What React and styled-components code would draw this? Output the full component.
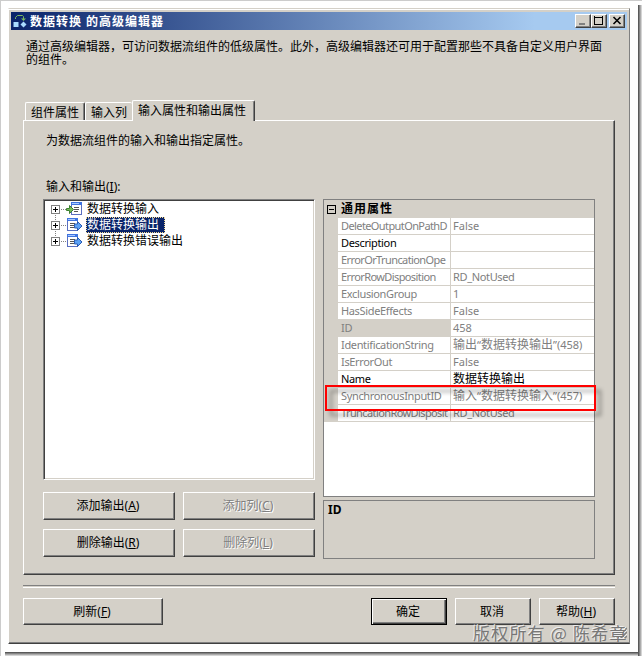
import React from 'react';
import styled, { createGlobalStyle } from 'styled-components';

const GlobalStyle = createGlobalStyle`
  * {
    box-sizing: border-box;
  }

  body {
    margin: 0;
    background: #fff;
    color: #000;
    font: 12px/14px 'Noto Sans', 'Noto Sans CJK SC', sans-serif;
    overflow: hidden;
  }

  u {
    text-decoration: underline;
    text-underline-offset: 1px;
  }
`;

const Page = styled.div`
  width: 642px;
  height: 656px;
  padding: 7px 0 0 7px;
  border-top: 1px solid #ccc;
  border-left: 1px solid #ccc;
  background: linear-gradient(90deg, #444, #888 40%, #e8e8e8) 637px 4px / 4px 652px no-repeat,
    linear-gradient(#444, #888 40%, #e8e8e8) 4px 651px / 634px 4px no-repeat, #fff;
`;

const Window = styled.div`
  position: relative;
  display: flex;
  flex-direction: column;
  width: 622px;
  height: 636px;
  padding: 2px 2px 0;
  background: #d4d0c8;
  border-left: 1px solid #fff;
  border-top: 1px solid #d4d0c8;
  border-right: 1px solid #808080;
  border-bottom: 1px solid #404040;
  box-shadow: inset 0 1px #fff, inset 0 -1px #808080;
`;

const TitleBar = styled.div`
  display: flex;
  align-items: center;
  flex: none;
  height: 18px;
  margin-top: 1px;
  padding: 0 2px;
  background: linear-gradient(90deg, #0a246a, #a6caf0 85%);
`;

const Title = styled.div`
  flex: 1;
  margin-left: 3px;
  padding-top: 1px;
  color: #fff;
  font-weight: bold;
  letter-spacing: 1px;
`;

const CaptionButton = styled.div`
  width: 16px;
  height: 14px;
  margin-left: ${({ apart }) => (apart ? '2px' : '0')};
  background: #d4d0c8;
  border: 1px solid;
  border-color: #fff #404040 #404040 #fff;
  box-shadow: inset -1px -1px #808080;

  svg {
    display: block;
  }
`;

const Intro = styled.p`
  margin: 10px 0 0 15px;
  height: 60px;
  line-height: 13px;
  white-space: pre;
`;

const Tabs = styled.div`
  display: flex;
  align-items: flex-end;
  position: relative;
  height: 20px;
  margin-left: 14px;
`;

const Tab = styled.div`
  flex: none;
  width: ${({ width }) => width}px;
  height: ${({ active }) => (active ? 21 : 18)}px;
  margin-bottom: ${({ active }) => (active ? -1 : 0)}px;
  padding: 3px 0 0 5px;
  background: #d4d0c8;
  border-top: 1px solid #fff;
  border-left: 1px solid #fff;
  border-right: ${({ covered }) => (covered ? '0' : '1px solid #404040')};
  box-shadow: ${({ covered }) => (covered ? 'none' : 'inset -1px 0 #808080')};
  border-radius: 2px 2px 0 0;
  white-space: nowrap;
`;

const Panel = styled.div`
  display: flex;
  flex-direction: column;
  height: 455px;
  margin: 0 12px;
  padding: 13px 18px 0 19px;
  border: 1px solid;
  border-color: #fff #404040 #404040 #fff;
  box-shadow: inset -1px -1px #808080;
`;

const PanelHint = styled.div`
  margin-left: 3px;
  height: 46px;
`;

const Columns = styled.div`
  display: flex;
  gap: 8px;
`;

const Column = styled.div`
  width: 272px;
`;

const Label = styled.div`
  height: 19px;
  margin-left: 3px;
`;

const Tree = styled.div`
  height: 281px;
  margin-bottom: 12px;
  padding: 1px 0 0 7px;
  background: #fff;
  border: 1px solid;
  border-color: #808080 #fff #fff #808080;
  box-shadow: inset 1px 1px #404040, inset -1px -1px #d4d0c8;
`;

const TreeRow = styled.div`
  display: flex;
  align-items: center;
  height: 16px;
`;

const TreeText = styled.span`
  height: 16px;
  margin-left: 3px;
  padding-right: ${({ selected }) => (selected ? 5 : 0)}px;
  line-height: 14px;
  border: 1px ${({ selected }) => (selected ? 'dotted #f5db95' : 'solid transparent')};
  background: ${({ selected }) => (selected ? '#0a246a' : 'none')};
  color: ${({ selected }) => (selected ? '#fff' : '#000')};
`;

const ButtonGrid = styled.div`
  display: grid;
  grid-template-columns: 132px 132px;
  gap: 9px 8px;
`;

const Button = styled.button`
  width: ${({ width }) => width || 132}px;
  height: ${({ height }) => height || 28}px;
  padding: 0 2px 0 0;
  background: #d4d0c8;
  color: ${({ disabled }) => (disabled ? '#808080' : '#000')};
  text-shadow: ${({ disabled }) => (disabled ? '1px 1px #fff' : 'none')};
  font: inherit;
  border: 1px solid;
  border-color: ${({ primary }) => (primary ? '#000' : '#fff #404040 #404040 #fff')};
  box-shadow: ${({ primary }) =>
    primary
      ? 'inset 1px 1px #fff, inset -1px -1px #404040, inset -2px -2px #808080'
      : 'inset -1px -1px #808080'};
`;

const PropertyGrid = styled.div`
  height: 298px;
  margin-top: 19px;
  position: relative;
  background: #fff;
  border: 1px solid #808080;
`;

const Category = styled.div`
  display: flex;
  align-items: center;
  height: 18px;
  padding-left: 3px;
  background: #d4d0c8;
  font-weight: bold;
  letter-spacing: 1px;

  svg {
    margin-right: 5px;
  }
`;

const PropertyRow = styled.div`
  display: grid;
  grid-template-columns: 112px 1fr;
  column-gap: 1px;
  height: 17px;
  padding: 0 0 1px 14px;
  background: #d4d0c8;
  color: ${({ editable }) => (editable ? '#000' : '#808080')};
`;

const Cell = styled.div`
  padding-left: 2px;
  line-height: 16px;
  background: #fff;
  white-space: nowrap;
`;

const NameCell = styled(Cell)`
  padding-left: 3px;
  background: ${({ picked }) => (picked ? '#d4d0c8' : '#fff')};
  font-family: 'Noto Sans', sans-serif;
  font-size: 11px;
  letter-spacing: ${({ tight }) => (tight ? '-0.6px' : '-0.35px')};
`;

const Latin = styled.span`
  font-size: 11px;
  line-height: 1;
  letter-spacing: ${({ tight }) => (tight ? '-0.35px' : '0')};
`;

const Highlight = styled.div`
  position: absolute;
  left: 1px;
  top: 185px;
  width: 271px;
  height: 26px;
  border: 2px solid #f00;
  filter: drop-shadow(5px 5px 2px rgba(0, 0, 0, 0.4));
`;

const Description = styled.div`
  height: 59px;
  margin-top: 3px;
  padding: 2px 4px;
  border: 1px solid #808080;
  font-weight: bold;
`;

const Divider = styled.div`
  flex: none;
  height: 3px;
  margin: 10px 12px;
  border-top: 1px solid #808080;
  border-bottom: 1px solid #fff;
`;

const Footer = styled.div`
  display: flex;
  gap: 8px;
  padding: 0 12px;

  button:first-child {
    margin-right: auto;
  }
`;

const Watermark = styled.div`
  position: absolute;
  left: 464px;
  top: 614px;
  color: #777;
  font: 17px/20px 'Noto Sans CJK SC', sans-serif;
  letter-spacing: 1.2px;
  text-shadow: -1px -1px #eee;
  white-space: nowrap;
`;

const Grip = styled.svg`
  position: absolute;
  right: 2px;
  bottom: 3px;
`;

const AppIcon = () => (
  <svg width="14" height="14" viewBox="0 0 14 14">
    <path d="M2.500 5V3.500l2-2h5l1 1V5" fill="none" stroke="#7cb860" />
    <path d="M8 4.500h5L10.500 7z" fill="#7cb860" />
    <rect x="0.500" y="8" width="5" height="5" fill="#a9dcff" />
    <path d="M10.500 7.500l3 3-3 3-3-3z" fill="#a9dcff" />
  </svg>
);

const Expander = ({ first, last }) => (
  <svg width="15" height="16" viewBox="0 0 15 16" shapeRendering="crispEdges">
    <rect x="0.500" y="4.500" width="8" height="8" fill="#fff" stroke="#808080" />
    <path d="M2 8.500h5M4.500 6v5" stroke="#000" />
    <path d="M10 8.500h5" stroke="#808080" strokeDasharray="1 1" />
    {!first && <path d="M4.500 0v4" stroke="#808080" strokeDasharray="1 1" />}
    {!last && <path d="M4.500 14v2" stroke="#808080" strokeDasharray="1 1" />}
  </svg>
);

const FlowIcon = ({ input }) => {
  const x = input ? 5 : 1;
  return (
    <svg width="17" height="16" viewBox="0 0 17 16">
      <rect x={x + 0.5} y="2.500" width="10" height="11" fill="#fff" stroke="#5a6fc0" />
      <path d={`M${x} 2.500h11`} stroke="#3f74e0" strokeWidth="3" />
      <path d={`M${x + 1} 2.500h7`} stroke="#a9c9ff" />
      <path
        d={`M${x + 3} 6.500h5M${x + 3} 8.500h5M${x + 3} 10.500h4`}
        stroke="#555"
      />
      {input ? (
        <path d="M0.500 7.500h3v-3l4 4-4 4v-3h-3z" fill="#79bd5c" stroke="#3d8230" />
      ) : (
        <path d="M8.500 7h3V4.500l4.500 4.500-4.500 4.500V11h-3z" fill="#5ca2f5" stroke="#2b5cb4" />
      )}
    </svg>
  );
};

// names are already shortened to what the 112px column can show
const properties = [
  { name: 'DeleteOutputOnPathD', value: 'False', tight: true },
  { name: 'Description', value: '', editable: true },
  { name: 'ErrorOrTruncationOpe', value: '', tight: true },
  { name: 'ErrorRowDisposition', value: 'RD_NotUsed', tight: true },
  { name: 'ExclusionGroup', value: '1' },
  { name: 'HasSideEffects', value: 'False' },
  { name: 'ID', value: '458', picked: true },
  { name: 'IdentificationString', value: '输出“数据转换输出”(458)' },
  { name: 'IsErrorOut', value: 'False' },
  { name: 'Name', value: '数据转换输出', editable: true },
  { name: 'SynchronousInputID', value: '输入“数据转换输入”(457)' },
  { name: 'TruncationRowDisposit', value: 'RD_NotUsed', tight: true },
];

const renderValue = (value) =>
  value.split(/([A-Za-z0-9_()“”]+)/).map((part, i) =>
    i % 2 ? (
      <Latin key={i} tight={part.includes('_')}>
        {part}
      </Latin>
    ) : (
      part
    )
  );

const App = () => (
  <Page>
    <GlobalStyle />
    <Window>
      <TitleBar>
        <AppIcon />
        <Title>数据转换 的高级编辑器</Title>
        <CaptionButton>
          <svg width="14" height="12"><path d="M3 9h6" stroke="#808080" strokeWidth="2" /></svg>
        </CaptionButton>
        <CaptionButton>
          <svg width="14" height="12" shapeRendering="crispEdges">
            <path d="M2 2h9M2.500 1v9M10.500 1v9M2 9.500h9" stroke="#000" fill="none" />
          </svg>
        </CaptionButton>
        <CaptionButton apart>
          <svg width="14" height="12"><path d="M3.500 2l7 7M10.500 2l-7 7" stroke="#000" strokeWidth="1.600" /></svg>
        </CaptionButton>
      </TitleBar>
      <Intro>
        {'通过高级编辑器，可访问数据流组件的低级属性。此外，高级编辑器还可用于配置那些不具备自定义用户界面\n的组件。'}
      </Intro>
      <Tabs>
        <Tab width={60}>组件属性</Tab>
        <Tab width={47} covered>输入列</Tab>
        <Tab width={123} active>输入属性和输出属性</Tab>
      </Tabs>
      <Panel>
        <PanelHint>为数据流组件的输入和输出指定属性。</PanelHint>
        <Columns>
          <Column>
            <Label>输入和输出(<u>I</u>):</Label>
            <Tree>
              <TreeRow><Expander first /><FlowIcon input /><TreeText>数据转换输入</TreeText></TreeRow>
              <TreeRow><Expander /><FlowIcon /><TreeText selected>数据转换输出</TreeText></TreeRow>
              <TreeRow><Expander last /><FlowIcon /><TreeText>数据转换错误输出</TreeText></TreeRow>
            </Tree>
            <ButtonGrid>
              <Button>添加输出(<u>A</u>)</Button>
              <Button disabled>添加列(<u>C</u>)</Button>
              <Button>删除输出(<u>R</u>)</Button>
              <Button disabled>删除列(<u>L</u>)</Button>
            </ButtonGrid>
          </Column>
          <Column>
            <PropertyGrid>
              <Category>
                <svg width="9" height="9" shapeRendering="crispEdges">
                  <rect x="0.500" y="0.500" width="8" height="8" fill="none" stroke="#000" />
                  <path d="M2 4.500h5" stroke="#000" />
                </svg>
                通用属性
              </Category>
              {properties.map(({ name, value, editable, picked, tight }) => (
                <PropertyRow key={name} editable={editable}>
                  <NameCell picked={picked} tight={tight}>{name}</NameCell>
                  <Cell>{renderValue(value)}</Cell>
                </PropertyRow>
              ))}
              <Highlight />
            </PropertyGrid>
            <Description>ID</Description>
          </Column>
        </Columns>
      </Panel>
      <Divider />
      <Footer>
        <Button width={140} height={27}>刷新(<u>F</u>)</Button>
        <Button width={76} height={27} primary>确定</Button>
        <Button width={76} height={27}>取消</Button>
        <Button width={76} height={27}>帮助(<u>H</u>)</Button>
      </Footer>
      <Grip width="13" height="13">
        <path d="M1 13L13 1M5 13l8-8M9 13l4-4" stroke="#808080" strokeWidth="1.500" />
        <path d="M0 12L12 0M4 12l9-9M8 12l5-5" stroke="#fff" strokeWidth="0.700" />
      </Grip>
      <Watermark>版权所有 @ 陈希章</Watermark>
    </Window>
  </Page>
);

export default App;
